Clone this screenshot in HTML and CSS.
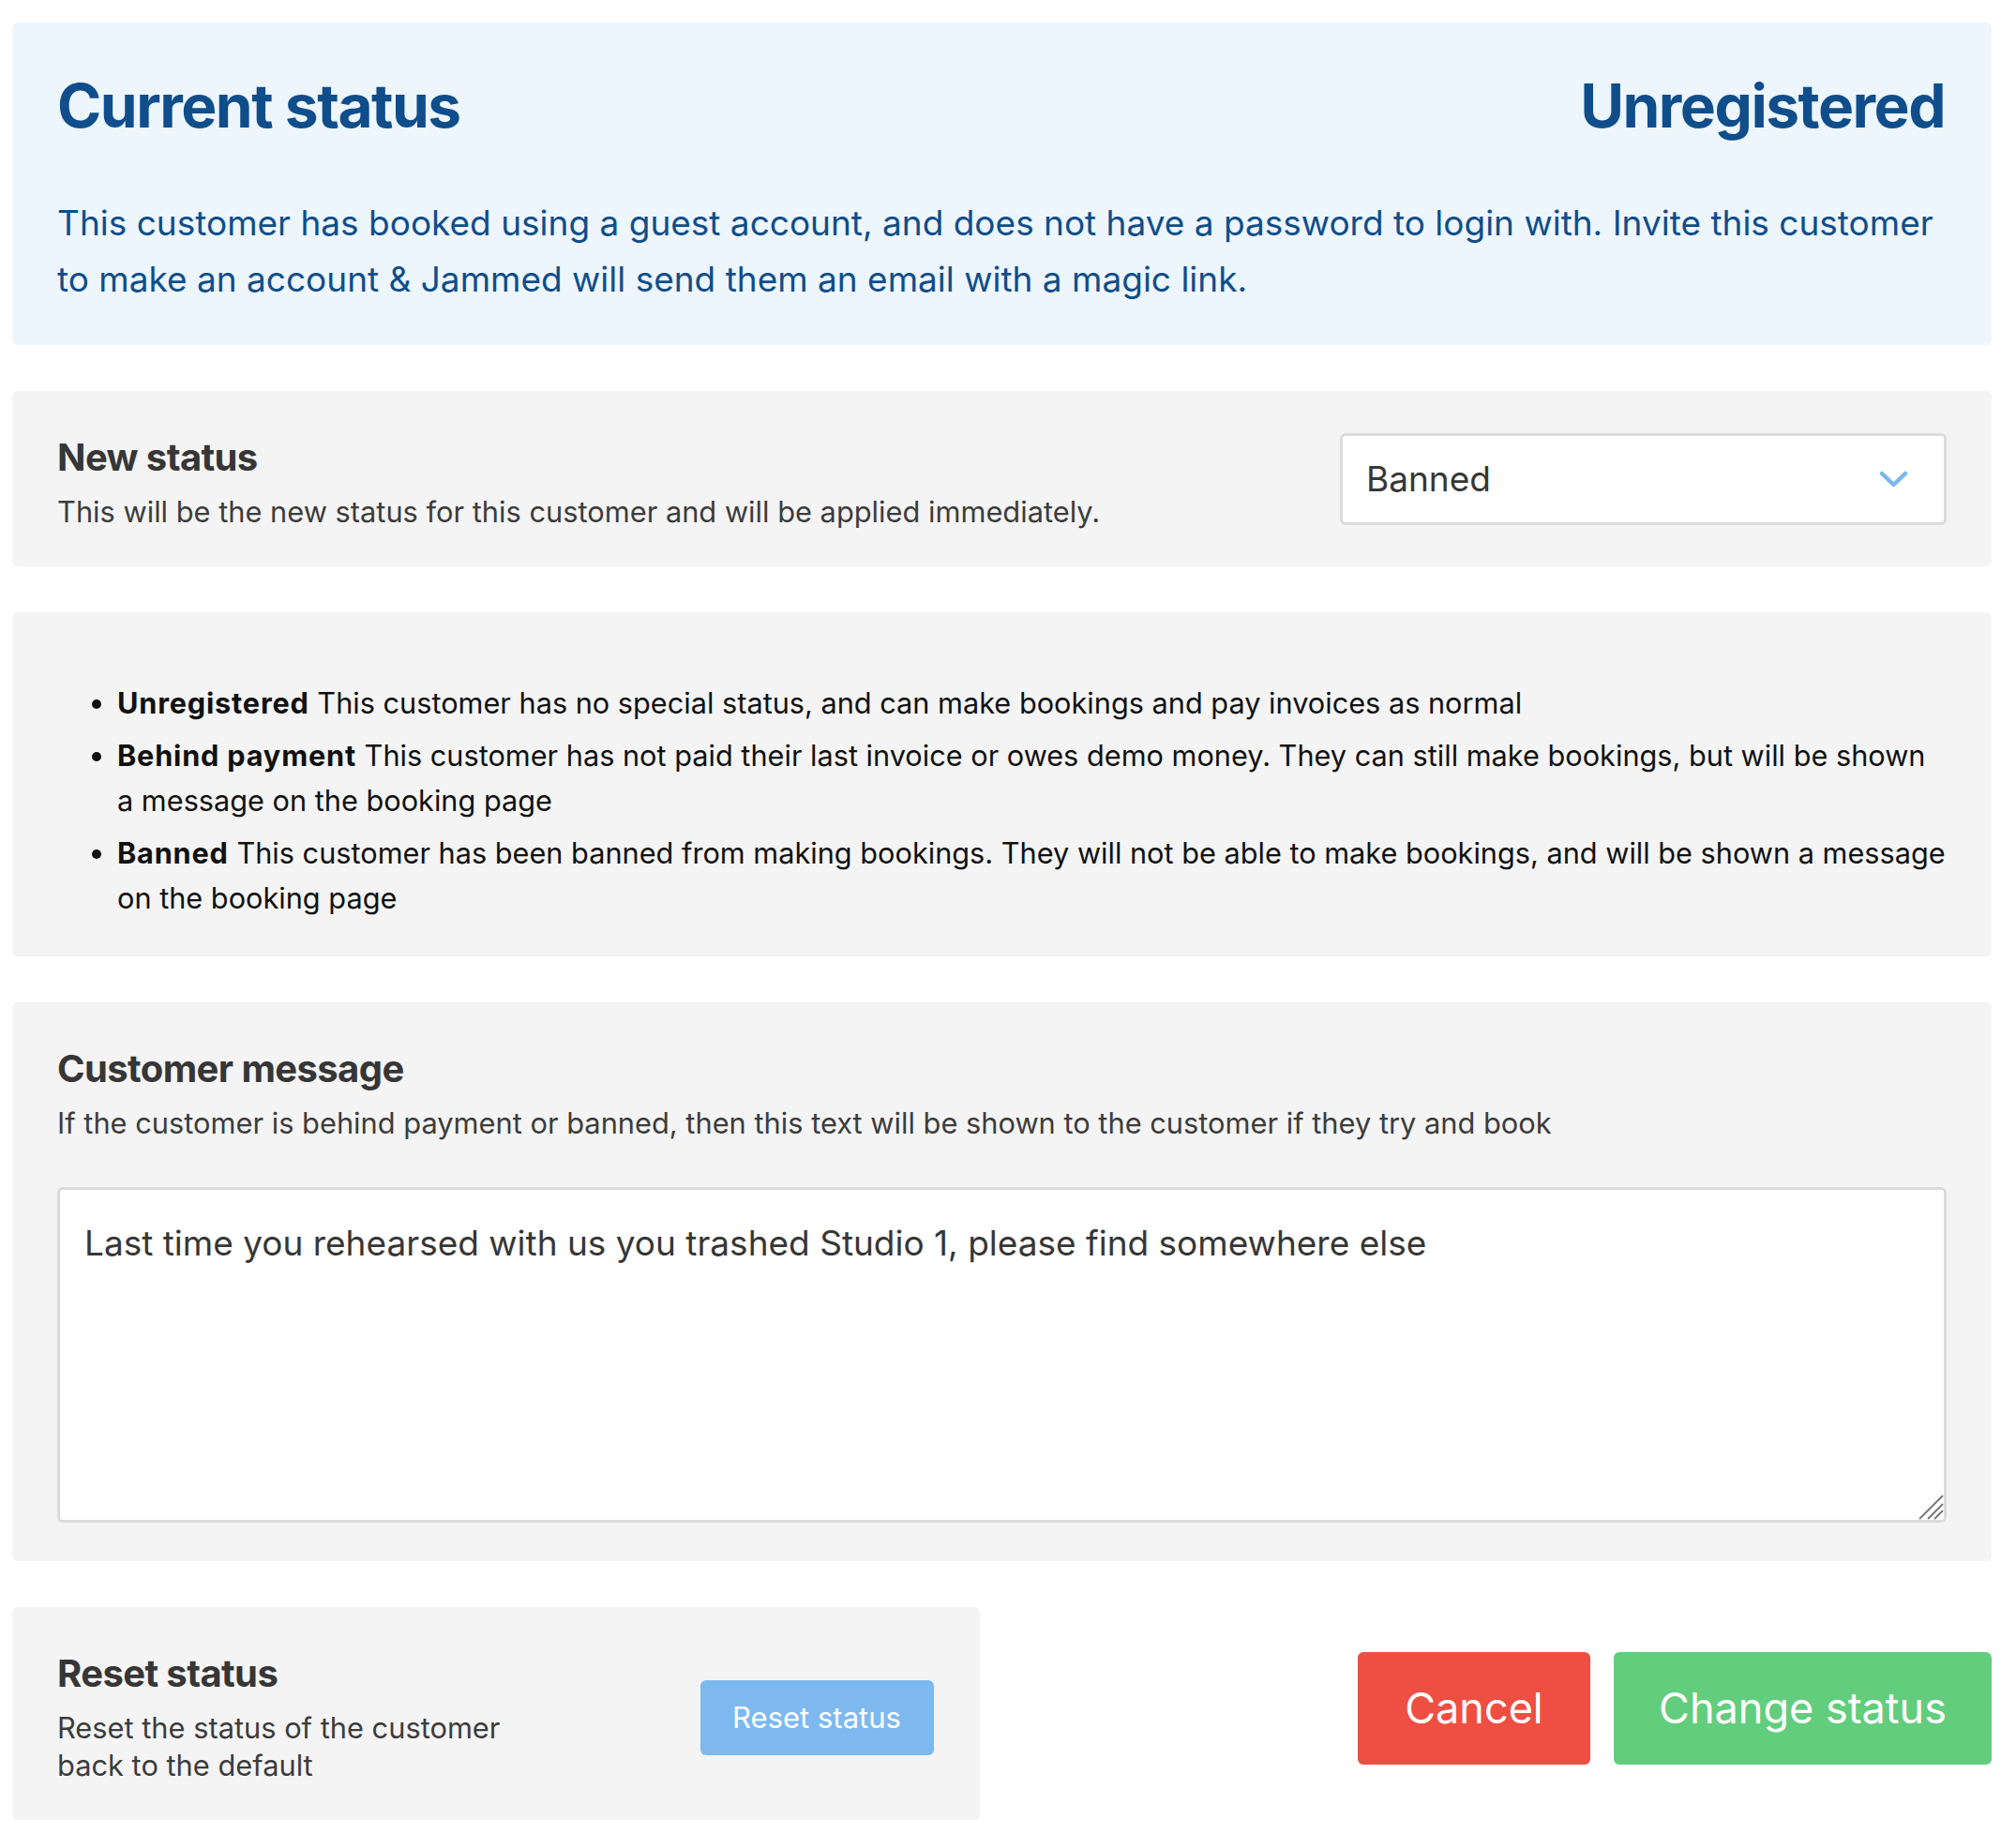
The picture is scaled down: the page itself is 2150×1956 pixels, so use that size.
FILE: index.html
```html
<!DOCTYPE html>
<html lang="en">
<head>
    <meta charset="UTF-8">
    <meta name="viewport" content="width=device-width, initial-scale=1.0">
    <title>Customer status</title>
    <link rel="stylesheet" href="styles.css">
</head>
<body>

    <main class="page">

        <!-- Stato attuale -->
        <section class="panel panel-info">
            <div class="info-head">
                <h1>Current status</h1>
                <h1>Unregistered</h1>
            </div>
            <p>This customer has booked using a guest account, and does not have a password to login with. Invite this customer to make an account &amp; Jammed will send them an email with a magic link.</p>
        </section>

        <!-- Nuovo stato -->
        <section class="panel panel-field">
            <div class="field-text">
                <h2>New status</h2>
                <p>This will be the new status for this customer and will be applied immediately.</p>
            </div>
            <div class="select">
                <span>Banned</span>
                <svg class="chevron" viewBox="0 0 31 18" width="31" height="18">
                    <polyline points="3,3 15.5,15 28,3" fill="none" stroke="#7ab8ee" stroke-width="4.5" stroke-linecap="round" stroke-linejoin="round"/>
                </svg>
            </div>
        </section>

        <!-- Legenda -->
        <section class="panel panel-list">
            <ul>
                <li><strong>Unregistered</strong> This customer has no special status, and can make bookings and pay invoices as normal</li>
                <li><strong>Behind payment</strong> This customer has not paid their last invoice or owes demo money. They can still make bookings, but will be shown a message on the booking page</li>
                <li><strong>Banned</strong> This customer has been banned from making bookings. They will not be able to make bookings, and will be shown a message on the booking page</li>
            </ul>
        </section>

        <!-- Messaggio -->
        <section class="panel panel-message">
            <h2>Customer message</h2>
            <p>If the customer is behind payment or banned, then this text will be shown to the customer if they try and book</p>
            <div class="message-box">
                <textarea>Last time you rehearsed with us you trashed Studio 1, please find somewhere else</textarea>
                <svg class="grip" viewBox="0 0 28 28" width="28" height="28">
                    <path d="M27 2 L2 27 M27 11 L11 27 M27 18 L18 27" stroke="#7a7a7a" stroke-width="2" fill="none"/>
                </svg>
            </div>
        </section>

        <div class="footer">
            <section class="panel panel-reset">
                <div class="field-text reset-text">
                    <h2>Reset status</h2>
                    <p>Reset the status of the customer back to the default</p>
                </div>
                <button class="btn btn-reset">Reset status</button>
            </section>

            <div class="actions">
                <button class="btn btn-cancel">Cancel</button>
                <button class="btn btn-save">Change status</button>
            </div>
        </div>

    </main>

</body>
</html>
```

FILE: styles.css
```css
/* Reset */
* {
    margin: 0;
    padding: 0;
    box-sizing: border-box;
}

body {
    background: #ffffff;
    font-family: Inter, 'Noto Sans', 'Liberation Sans', sans-serif;
    color: #363636;
}

.page {
    display: flex;
    flex-direction: column;
    gap: 49px;
    padding: 24px 26px 13px 13px;
}

.panel {
    background: #f4f4f4;
    border-radius: 6px;
    padding: 47px 48px 38px;
}

h2 {
    font-size: 40px;
    line-height: 48px;
    font-weight: 700;
    letter-spacing: -0.6px;
    color: #363636;
}

.field-text p,
.panel-message p {
    margin-top: 14px;
    font-size: 30.8px;
    line-height: 40px;
    color: #3c3c3c;
}

/* Stato attuale */
.panel-info {
    background: #edf5fd;
    color: #0f4e8a;
    padding: 50px 50px 40px 48px;
}

.info-head {
    display: flex;
    justify-content: space-between;
    align-items: baseline;
}

.info-head h1 {
    font-size: 64px;
    line-height: 77px;
    font-weight: 700;
    letter-spacing: -1.5px;
}

.panel-info p {
    margin-top: 57px;
    font-size: 37px;
    line-height: 60px;
}

/* Nuovo stato */
.panel-field {
    display: flex;
    justify-content: space-between;
    align-items: center;
}

.select {
    width: 647px;
    height: 98px;
    margin-top: -9px;
    background: #ffffff;
    border: 3px solid #dbdbdb;
    border-radius: 6px;
    display: flex;
    align-items: center;
    justify-content: space-between;
    padding: 0 38px 0 25px;
    font-size: 37px;
    color: #363636;
}

.chevron {
    display: block;
}

/* Legenda */
.panel-list {
    padding: 73px 48px 38px;
}

.panel-list ul {
    padding-left: 64px;
    font-size: 30.7px;
    line-height: 48px;
    color: #111111;
}

.panel-list strong {
    letter-spacing: 0.8px;
}

.panel-list li + li {
    margin-top: 8px;
}

/* Messaggio */
.panel-message {
    padding-bottom: 41px;
}

.message-box {
    position: relative;
    margin-top: 48px;
}

.message-box textarea {
    display: block;
    width: 100%;
    height: 358px;
    padding: 30px 26px;
    border: 3px solid #dbdbdb;
    border-radius: 6px;
    background: #ffffff;
    font-family: Inter, 'Noto Sans', 'Liberation Sans', sans-serif;
    font-size: 37px;
    line-height: 54px;
    color: #363636;
    resize: none;
    outline: none;
}

.grip {
    position: absolute;
    right: 3px;
    bottom: 3px;
}

/* Piede */
.footer {
    display: grid;
    grid-template-columns: 1fr 1fr;
    gap: 48px;
}

.panel-reset {
    display: flex;
    justify-content: space-between;
    align-items: center;
    padding-right: 49px;
}

.reset-text {
    max-width: 500px;
}

.actions {
    display: flex;
    justify-content: flex-end;
    align-items: flex-start;
    gap: 25px;
    padding-top: 48px;
}

.btn {
    border: none;
    border-radius: 6px;
    color: #ffffff;
    font-family: Inter, 'Noto Sans', 'Liberation Sans', sans-serif;
    white-space: nowrap;
    cursor: pointer;
}

.btn-reset {
    background: #7db9ef;
    font-size: 31px;
    line-height: 40px;
    padding: 20px 0;
    width: 249px;
}

.btn-cancel,
.btn-save {
    font-size: 45px;
    line-height: 72px;
    padding: 24px 0;
}

.btn-cancel {
    background: #ef4e42;
    width: 248px;
}

.btn-save {
    background: #62cd7d;
    width: 403px;
}
```
